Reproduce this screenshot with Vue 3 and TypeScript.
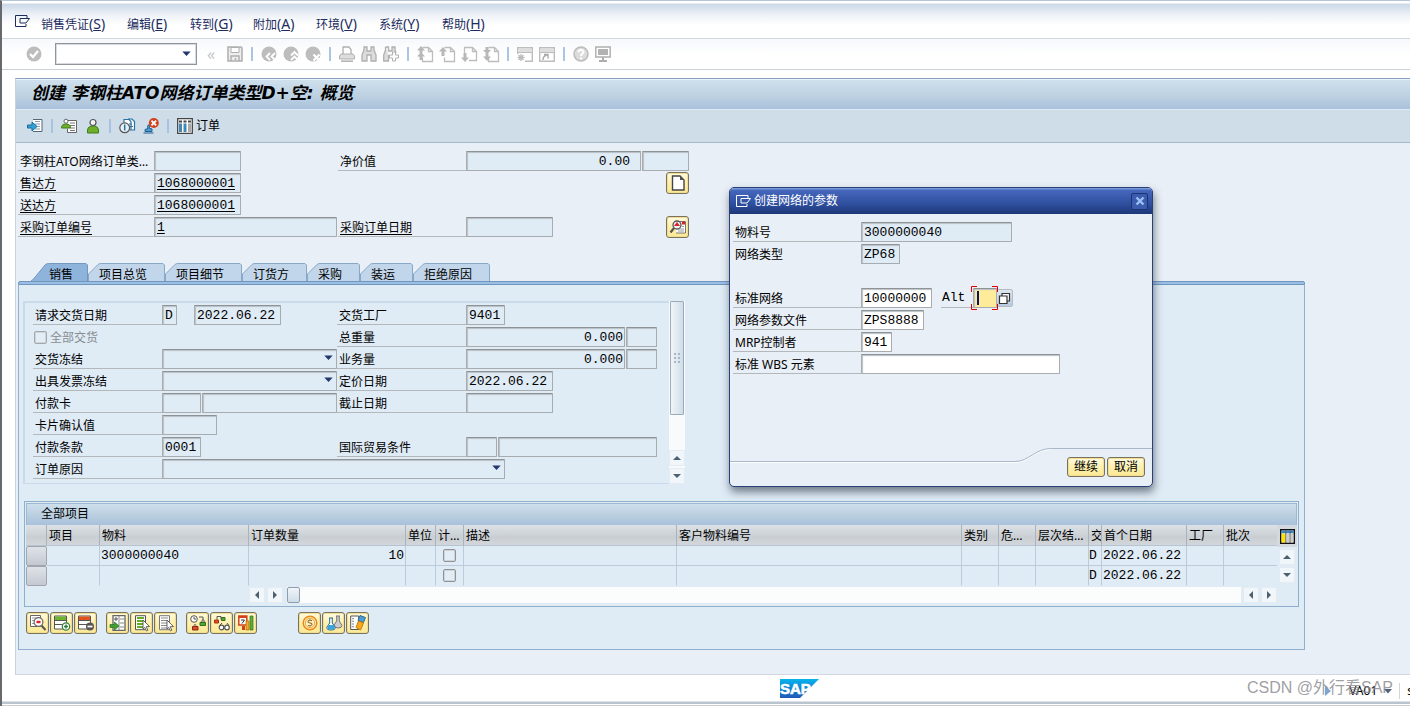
<script setup lang="ts">
interface Menu { text: string; key: string }
interface Tab { text: string; width: number }
interface Row { date: string; material: string; qty: string }

const menus: Menu[] = [
  { text: '销售凭证', key: 'S' },
  { text: '编辑', key: 'E' },
  { text: '转到', key: 'G' },
  { text: '附加', key: 'A' },
  { text: '环境', key: 'V' },
  { text: '系统', key: 'Y' },
  { text: '帮助', key: 'H' },
]

const systemTools: string[][] = [
  ['back', 'exit', 'cancel'],
  ['print', 'find', 'findNext'],
  ['pageFirst', 'pageUp', 'pageDown', 'pageLast'],
  ['session', 'shortcut'],
  ['help', 'monitor'],
]

const appTools: string[][] = [['enterDoc'], ['personDoc', 'person'], ['clockDoc', 'stampCancel']]

const tabs: Tab[] = [
  { text: '销售', width: 58 },
  { text: '项目总览', width: 77 },
  { text: '项目细节', width: 77 },
  { text: '订货方', width: 65 },
  { text: '采购', width: 53 },
  { text: '装运', width: 53 },
  { text: '拒绝原因', width: 77 },
]

const tabShape = (tab: Tab, index: number): string =>
  index === 0
    ? `M0.5 18.5 Q4 16 6 13 L15 2 Q16.5 0.5 18.5 0.5 H${tab.width - 2} L${tab.width - 0.5} 2 V18.5`
    : `M0.5 18.5 V11 L10 1.5 Q11 0.5 13 0.5 H${tab.width - 2} L${tab.width - 0.5} 2 V18.5`

const columns: string[] = ['项目', '物料', '订单数量', '单位', '计…', '描述', '客户物料编号', '类别', '危…', '层次结…', '交', '首个日期', '工厂', '批次']

const rows: Row[] = [
  { material: '3000000040', qty: '10', date: '2022.06.22' },
  { material: '', qty: '', date: '2022.06.22' },
]

const itemTools: string[][] = [
  ['detail', 'rowAdd', 'rowRemove'],
  ['listEnter', 'listSelect', 'listClear'],
  ['schedule', 'structure', 'calendar'],
  ['coin', 'flasks', 'notes'],
]

const disc = '<circle cx="8" cy="8" r="7.5" fill="#bdbdbd"/>'
const page = '<path d="M5.500 1.500h6l4 4v10h-10v-4M11.500 1.500v4h4" fill="none" stroke="#bdbdbd" stroke-width="1.300"/>'
const windowFrame = '<path d="M.7 8V1.700h14.600v13.600H8" fill="none" stroke="#bdbdbd" stroke-width="1.400"/><path d="M2 3h12v3H2z" fill="#dedede"/><path d="M1 6.500h14" stroke="#bdbdbd"/>'
const sheet = '<path d="M3 .7h12v14.600H3z" fill="#fff" stroke="#666" stroke-width="1.300"/>'
const lines = '<path d="M.5 1h12v13H.5z" fill="#fff" stroke="#555"/><path d="M.5 5.500h12M.5 9.500h12" stroke="#555"/>'
const pointer = '<path d="M9 5l6.500 6.500-3.300.2 1.700 3.500-1.500.7-1.700-3.500L9 14z" fill="#fff" stroke="#555" stroke-width=".9"/>'

const icons: Record<string, string> = {
  check: disc + '<path d="M4 8l3 3 5-6" fill="none" stroke="#fff" stroke-width="2.200"/>',
  save: '<path d="M1 1h13l1 1v13H1z" fill="#eee" stroke="#aeaeae" stroke-width="1.500"/><path d="M4 1.500h8v5H4z" fill="#fff" stroke="#aeaeae"/><path d="M4 15v-5h8v5M8.500 12v2" fill="none" stroke="#aeaeae" stroke-width="1.400"/>',
  back: disc + '<path d="M9 7l-3.500 3.500L9 14M14 7l-3.500 3.500L14 14" fill="none" stroke="#fff" stroke-width="1.800"/>',
  exit: disc + '<path d="M8 9.500l3.500-3.500L15 9.500M8 14l3.500-3.500L15 14" fill="none" stroke="#fff" stroke-width="1.800"/>',
  cancel: disc + '<path d="M8.500 8.500l6 6M14.500 8.500l-6 6" stroke="#fff" stroke-width="2.200"/>',
  print: '<path d="M4 8V1h6l2 2.500V8" fill="#fff" stroke="#b0b0b0" stroke-width="1.300"/><path d="M2 8h12l1.500 2v3H.5v-3z" fill="#ddd" stroke="#b0b0b0"/><path d="M2 15.200h12" stroke="#b0b0b0" stroke-width="1.500"/>',
  find: '<path d="M3 1h3v4h4V1h3v3l2 5v6h-5V9H6v6H1V9l2-5z" fill="#ddd" stroke="#b0b0b0" stroke-width="1.300"/>',
  findNext: '<path d="M2.500 1h3v4h3.500V1h3v3l1 3M5.500 9v6H.7V9l1.800-5V1" fill="#ddd" stroke="#b0b0b0" stroke-width="1.300"/><path d="M9.500 6h3v3h3v3h-3v3h-3v-3h-3V9h3z" fill="#fff" stroke="#b0b0b0"/>',
  pageFirst: page + '<path d="M4 0l4 4.500H5.500V7h-3V4.500H0zM4 6l4 4.500H5.500V14h-3v-3.500H0z" fill="#b8b8b8"/>',
  pageUp: page + '<path d="M4 1l4 4.500H5.500V10h-3V5.500H0z" fill="#b8b8b8"/>',
  pageDown: '<path d="M3.500 7V1.500h8l4 4v9H8M11.500 1.500v4h4" fill="none" stroke="#bdbdbd" stroke-width="1.300"/><path d="M4 16L0 11.500h2.500V7h3v4.500H8z" fill="#b8b8b8"/>',
  pageLast: page + '<path d="M4 8.500L0 4h2.500V1h3v3H8zM4 15L0 10.500h2.500v-3h3v3H8z" fill="#b8b8b8"/>',
  session: windowFrame + '<path d="M4 8v7M.5 11.500h7M1.500 9l5 5M6.500 9l-5 5" stroke="#bdbdbd" stroke-width="1.300"/>',
  shortcut: windowFrame + '<path d="M.7 8v7.300H8" fill="none" stroke="#bdbdbd" stroke-width="1.400"/><path d="M4 14q0-4 4-5M5 8.500h4v4" fill="none" stroke="#aaa" stroke-width="1.400"/>',
  help: '<circle cx="8" cy="8" r="7" fill="#dcdcdc" stroke="#bbb" stroke-width="1.500"/><path d="M5.500 6.300q0-2.300 2.500-2.300t2.500 2q0 1.200-1.500 2-1 .6-1 2M8 11.500v1.700" fill="none" stroke="#fff" stroke-width="2"/>',
  monitor: '<path d="M.8 1h14.400v10H.8z" fill="#fff" stroke="#aeaeae" stroke-width="1.400"/><path d="M3 3h10v6H3z" fill="#b3b3b3"/><path d="M8 11v3M4 15h8" stroke="#aeaeae" stroke-width="2"/>',
  enterDoc: '<path d="M6 1.500h9v12H6" fill="#fff" stroke="#567"/><path d="M8 3.500h5M8 6h5M10 8.500h3M8 11h5" stroke="#89a"/><path d="M.5 7H5V4l5 4.500-5 4.500v-3H.5z" fill="#33a0d6" stroke="#166d9f"/>',
  personDoc: '<path d="M7 2.500h8.500v12h-9v-4" fill="#fff" stroke="#666"/><path d="M9 5h5M9 7.500h5M9 10h5M9 12.500h5" stroke="#777"/><circle cx="5" cy="3.200" r="2" fill="#fff" stroke="#666"/><path d="M.5 10q0-4 4.500-4t4.500 4z" fill="#6fae28" stroke="#3e7d1b"/>',
  person: '<path d="M2.500 15v-3q0-3 3.500-4h4q3.500 1 3.500 4v3z" fill="#6fae28" stroke="#3e7d1b"/><circle cx="8" cy="4.500" r="3" fill="#f4f4f4" stroke="#555" stroke-width="1.200"/>',
  clockDoc: '<path d="M5 4.500v-3h5l2 2v8M9 1h4l2.500 2.500V12H11" fill="#fff" stroke="#2872a3" stroke-width="1.200"/><path d="M10 6h3M11 8.500h3" stroke="#2872a3"/><circle cx="5.700" cy="9.800" r="4.900" fill="#e6f2fa" stroke="#555" stroke-width="1.200"/><path d="M5.700 6.500v6" stroke="#2872a3" stroke-width="1.500"/>',
  stampCancel: '<path d="M.5 15h10M2 13.500v-2l3-1-.5-2Q5 6 6.500 7T6 10l3 1v2.500z" fill="#4b9bcf" stroke="#1f608f"/><circle cx="10.800" cy="5" r="5" fill="#d4401c"/><path d="M8.500 2.700l4.600 4.600M13.100 2.700L8.500 7.300" stroke="#fff" stroke-width="1.900"/>',
  table: '<path d="M.7 .7h14.600v14.600H.7z" fill="#fff" stroke="#444" stroke-width="1.300"/><path d="M2 2.500h3v2H2zM6.500 2.500h3v2h-3zM11 2.500h3v2h-3z" fill="#444"/><path d="M2 5.500h3v8.500H2zM6.500 5.500h3v8.500h-3z" fill="#4587b2"/><path d="M11 5.500h3v8.500h-3z" fill="#aaa"/>',
  document: '<path d="M2.500 1h7.500l4 4v10H2.500z" fill="#fff" stroke="#444" stroke-width="1.400"/><path d="M10 1v4h4z" fill="#555"/>',
  inspect: '<path d="M7 2.500h8.500v11.500H6" fill="#fff" stroke="#777"/><path d="M12 2.500h3v3h-3z" fill="#e02020"/><path d="M8 10h6M8 12h6M12 7.500h2" stroke="#999"/><circle cx="7" cy="6" r="4" fill="#f3f3f3" stroke="#555" stroke-width="1.300"/><path d="M4 7l3-4 3 4z" fill="#e02020"/><path d="M4 9L.5 13.500" stroke="#555" stroke-width="2.200"/>',
  detail: '<path d="M.5 .5h10v11H.5z" fill="#fff" stroke="#666"/><path d="M2 3h4M2 5.500h2M2 8.500h2" stroke="#999"/><circle cx="8.500" cy="7" r="4.400" fill="#fff" stroke="#666" stroke-width="1.200"/><path d="M6.500 7h4" stroke="#e02020" stroke-width="2.400"/><path d="M11.500 10.500l4 4.500" stroke="#555" stroke-width="2"/>',
  rowAdd: lines + '<path d="M1 1.500h11v3.500H1z" fill="#6db52c"/><circle cx="12" cy="11.500" r="3.700" fill="#fff" stroke="#2f7d3e" stroke-width="1.200"/><path d="M10 11.500h4M12 9.500v4" stroke="#2f7d3e" stroke-width="1.500"/>',
  rowRemove: lines + '<path d="M1 1.500h11v3.500H1z" fill="#e0531b"/><circle cx="12" cy="11.500" r="4" fill="#555"/><path d="M9.500 11.500h5" stroke="#fff" stroke-width="1.700"/>',
  listEnter: sheet + '<path d="M9 1v14M10 4h4M10 8h4M10 12h4" stroke="#888"/><path d="M4 4h4M6 2v4" stroke="#555"/><path d="M0 9.500h4.500V7L9 11l-4.500 4v-2.500H0z" fill="#42a02f" stroke="#237121" stroke-width=".7"/>',
  listSelect: '<path d="M1.500 .7h10v14h-10z" fill="#fff" stroke="#555"/><path d="M3 3h7M3 6h7M3 9h7M3 12h7" stroke="#65ad24" stroke-width="2.200"/>' + pointer,
  listClear: '<path d="M1.500 .7h10v14h-10z" fill="#fff" stroke="#777"/><path d="M3 3h7M3 5.500h7M3 8h7M3 10.500h7M3 13h7" stroke="#888"/>' + pointer,
  schedule: '<circle cx="4" cy="4" r="3.300" fill="#fff" stroke="#555"/><path d="M4 2v2h2" fill="none" stroke="#555"/><path d="M9 2h4v5" fill="none" stroke="#555"/><path d="M11 7l2-3 2 3M3 12l2-3 2 3" fill="none" stroke="#777"/><path d="M10 7.500h5.500v3H10z" fill="#55a630" stroke="#2f701d"/><path d="M2.500 11.500H8v3.500H2.500z" fill="#d94b22" stroke="#8b2b14"/>',
  structure: '<path d="M3 4.500V1.500h4v3h3" fill="none" stroke="#555"/><path d="M.5 5h4v3h-4z" fill="#e0531b" stroke="#a33010"/><path d="M7.500 2.500h3.500v3H7.500z" fill="#55a630" stroke="#2f701d"/><circle cx="7.500" cy="12.500" r="2.300" fill="#fff" stroke="#555" stroke-width="1.200"/><circle cx="13" cy="12.500" r="2.300" fill="#fff" stroke="#555" stroke-width="1.200"/><path d="M6 10l2-2M14.500 10l-1.500-2" stroke="#555"/>',
  calendar: '<path d="M.8 1h8v9h-8z" fill="#fff" stroke="#d44118" stroke-width="1.500"/><path d="M1 2h8" stroke="#d44118" stroke-width="2"/><path d="M3 5h3.500L4 8.500" fill="none" stroke="#333"/><path d="M4 11h3v4H4z" fill="#d44118"/><path d="M8 6h3v9H8z" fill="#f2aa24" stroke="#a96e09" stroke-width=".7"/><path d="M12 1h3v14h-3z" fill="#5fae3b" stroke="#2f701d" stroke-width=".7"/>',
  coin: '<circle cx="8" cy="8" r="6.800" fill="#fff2bd" stroke="#e98a1a" stroke-width="1.500"/><circle cx="8" cy="8" r="4.700" fill="none" stroke="#efa23a"/><path d="M10 5.700Q7.500 4.500 6.300 6T8 8t1.700 2T6 10.500" fill="none" stroke="#8a6a30" stroke-width="1.100"/>',
  flasks: '<path d="M10 1h4M10.700 1v5L8 10q0 3 4 3t4-2.500L13.300 6V1" fill="#ccc" stroke="#777"/><path d="M3 3h4M3.700 3v5L.7 12.500q0 2.500 4.300 2.500t4.300-2.500L6.300 8V3" fill="#fff" stroke="#236b97"/><path d="M2.500 10h5l1.500 3q-.5 1.500-4 1.500T1.300 13z" fill="#3ca3d9"/>',
  notes: '<path d="M.7 1h8v13.500h-8z" fill="#fff" stroke="#555"/><path d="M3 3v10" stroke="#333" stroke-dasharray="1.200 1.500"/><path d="M10 .5l5.500 2-2 5-5.500-2z" fill="#4f9dcc" stroke="#2c6d96"/><path d="M8.500 6l5 2-3 7-4.500-2.500z" fill="#f6a91c" stroke="#c9790a"/>',
  layout: '<path d="M.8 .8h14.400v14.400H.8z" fill="#fff" stroke="#111" stroke-width="1.600"/><path d="M1.600 1.600h12.800v3H1.600z" fill="#3985c4"/><path d="M1.600 5h4v9.400h-4z" fill="#ffe100"/><path d="M7 5h3v9.400H7zM11.300 5h3v9.400h-3z" fill="#ccc"/><path d="M6.200 1.600v13M10.700 1.600v13" stroke="#555"/>',
}
</script>

<template>
  <div class="window">
    <nav class="menubar">
      <svg class="winicon" viewBox="0 0 16 14"><path d="M12 3V.5H.5v11H11V9M5 3.500h9.500L11 8H5z" fill="none" stroke="currentColor" /></svg>
      <a v-for="m in menus" :key="m.key" href="#" class="menu">{{ m.text }}<span class="accel">(<u>{{ m.key }}</u>)</span></a>
    </nav>

    <div class="systembar">
      <button class="tool" aria-label="回车"><svg viewBox="0 0 16 16" v-html="icons.check" /></button>
      <span class="command">
        <input type="text" aria-label="命令">
        <svg class="arrow" viewBox="0 0 10 6"><path d="M0 .5h10L5 6z" /></svg>
      </span>
      <button class="collapse" aria-label="折叠">«</button>
      <button class="tool" aria-label="保存"><svg viewBox="0 0 16 16" v-html="icons.save" /></button>
      <template v-for="(group, g) in systemTools" :key="g">
        <i class="sep" />
        <button v-for="name in group" :key="name" class="tool" :aria-label="name"><svg viewBox="0 0 16 16" v-html="icons[name]" /></button>
      </template>
    </div>

    <main class="screen">
      <h1 class="title">创建 李钢柱ATO网络订单类型D+空: 概览</h1>
      <div class="appbar">
        <template v-for="(group, g) in appTools" :key="g">
          <button v-for="name in group" :key="name" class="tool" :aria-label="name"><svg viewBox="0 0 16 16" v-html="icons[name]" /></button>
          <i class="sep" />
        </template>
        <button class="tool wide"><svg viewBox="0 0 16 16" v-html="icons.table" />订单</button>
      </div>

      <section class="header-form">
        <div class="cell"><label for="order">李钢柱ATO网络订单类…</label><input id="order" class="w87"></div>
        <div class="cell"><label for="net">净价值</label><input id="net" class="w175 num pad" value="0.00"><input class="w47" aria-label="货币"></div>
        <div class="cell"><label for="sold" class="link">售达方</label><input id="sold" class="w87 link" value="1068000001"></div>
        <div class="cell"><button class="yellow square end" aria-label="凭证"><svg viewBox="0 0 16 16" v-html="icons.document" /></button></div>
        <div class="cell"><label for="ship" class="link">送达方</label><input id="ship" class="w87 link" value="1068000001"></div>
        <div class="cell" />
        <div class="cell"><label for="po" class="link">采购订单编号</label><input id="po" class="w183 link" value="1"></div>
        <div class="cell"><label for="podate" class="link">采购订单日期</label><input id="podate" class="w87"><button class="yellow square end" aria-label="伙伴"><svg viewBox="0 0 16 16" v-html="icons.inspect" /></button></div>
      </section>

      <section class="tabset">
        <div class="tabs" role="tablist">
          <button v-for="(t, i) in tabs" :key="t.text" role="tab" class="tab" :class="{ active: i === 0 }" :style="{ width: t.width + 'px' }">
            <svg :width="t.width" height="19"><path :d="tabShape(t, i)" /></svg><span>{{ t.text }}</span>
          </button>
        </div>
        <div class="rail" />
        <div class="tabbody">
          <div class="sales">
            <div class="sales-form">
              <div class="cell"><label for="reqd">请求交货日期</label><input id="reqd" class="w15" value="D"><input class="w87 apart" aria-label="日期" value="2022.06.22"></div>
              <div class="cell"><label for="plant">交货工厂</label><input id="plant" class="w39" value="9401"></div>
              <div class="cell"><input id="full" type="checkbox" class="box"><label for="full" class="boxlabel">全部交货</label></div>
              <div class="cell"><label for="weight">总重量</label><input id="weight" class="w159 num" value="0.000"><input class="w31" aria-label="重量单位"></div>
              <div class="cell"><label for="dblock">交货冻结</label><span class="pick w175"><select id="dblock" /><svg class="arrow" viewBox="0 0 10 6"><path d="M0 .5h10L5 6z" /></svg></span></div>
              <div class="cell"><label for="volume">业务量</label><input id="volume" class="w159 num" value="0.000"><input class="w31" aria-label="体积单位"></div>
              <div class="cell"><label for="bblock">出具发票冻结</label><span class="pick w175"><select id="bblock" /><svg class="arrow" viewBox="0 0 10 6"><path d="M0 .5h10L5 6z" /></svg></span></div>
              <div class="cell"><label for="pdate">定价日期</label><input id="pdate" class="w87" value="2022.06.22"></div>
              <div class="cell"><label for="card">付款卡</label><input id="card" class="w39"><input class="w135" aria-label="卡号"></div>
              <div class="cell"><label for="until">截止日期</label><input id="until" class="w87"></div>
              <div class="cell"><label for="cvv">卡片确认值</label><input id="cvv" class="w55"></div>
              <div class="cell" />
              <div class="cell"><label for="terms">付款条款</label><input id="terms" class="w39" value="0001"></div>
              <div class="cell"><label for="inco">国际贸易条件</label><input id="inco" class="w31"><input class="w159" aria-label="贸易条件地点"></div>
              <div class="cell full"><label for="reason">订单原因</label><span class="pick w343"><select id="reason" /><svg class="arrow" viewBox="0 0 10 6"><path d="M0 .5h10L5 6z" /></svg></span></div>
            </div>
            <div class="vscroll">
              <div class="vthumb"><i v-for="n in 6" :key="n" /></div>
              <button class="sbtn push" aria-label="向上"><svg viewBox="0 0 8 8"><path d="M0 6l4-4 4 4z" /></svg></button>
              <button class="sbtn" aria-label="向下"><svg viewBox="0 0 8 8"><path d="M0 2l4 4 4-4z" /></svg></button>
            </div>
          </div>

          <div class="items">
            <h2>全部项目</h2>
            <div class="grid">
              <table>
                <colgroup><col v-for="n in 15" :key="n" :class="'c' + n"></colgroup>
                <thead><tr><th /><th v-for="c in columns" :key="c">{{ c }}</th></tr></thead>
                <tbody>
                  <tr v-for="(r, i) in rows" :key="i">
                    <td class="handle" /><td /><td>{{ r.material }}</td><td class="qty">{{ r.qty }}</td><td />
                    <td class="tick"><input type="checkbox" class="box" aria-label="计"></td>
                    <td /><td /><td /><td /><td /><td class="flag">D</td><td>{{ r.date }}</td><td /><td />
                  </tr>
                </tbody>
              </table>
              <div class="side">
                <button class="config" aria-label="配置"><svg viewBox="0 0 16 16" v-html="icons.layout" /></button>
                <button class="sbtn" aria-label="上一行"><svg viewBox="0 0 8 8"><path d="M0 6l4-4 4 4z" /></svg></button>
                <button class="sbtn" aria-label="下一行"><svg viewBox="0 0 8 8"><path d="M0 2l4 4 4-4z" /></svg></button>
              </div>
            </div>
            <div class="hscroll">
              <button class="sbtn" aria-label="向左"><svg viewBox="0 0 8 8"><path d="M6 0L2 4l4 4z" /></svg></button>
              <button class="sbtn" aria-label="向右"><svg viewBox="0 0 8 8"><path d="M2 0l4 4-4 4z" /></svg></button>
              <div class="htrack"><div class="hthumb" /></div>
              <button class="sbtn" aria-label="左移"><svg viewBox="0 0 8 8"><path d="M6 0L2 4l4 4z" /></svg></button>
              <button class="sbtn" aria-label="右移"><svg viewBox="0 0 8 8"><path d="M2 0l4 4-4 4z" /></svg></button>
            </div>
          </div>

          <div class="itembar">
            <div v-for="(group, g) in itemTools" :key="g" class="group">
              <button v-for="name in group" :key="name" class="yellow square" :aria-label="name"><svg viewBox="0 0 16 16" v-html="icons[name]" /></button>
            </div>
          </div>
        </div>
      </section>
    </main>

    <footer class="status">
      <svg class="logo" viewBox="0 0 39 19" role="img" aria-label="SAP">
        <defs><linearGradient id="sapfill" x2="0" y2="1"><stop offset="0" stop-color="#05b3ee" /><stop offset="1" stop-color="#2058b8" /></linearGradient></defs>
        <path d="M0 0h39L20 19H0z" fill="url(#sapfill)" />
        <text x="0" y="15" font-size="15" font-weight="700" fill="#fff" stroke="#fff" stroke-width=".6">SAP</text>
      </svg>
      <div class="session">
        <svg viewBox="0 0 8 10"><path d="M1 0l6 5-6 5z" fill="#7ba6d2" /></svg>
        <span>VA01</span>
        <svg class="tri" viewBox="0 0 10 6"><path d="M0 .5h10L5 6z" fill="#53617c" /></svg>
        <i /><span>s</span>
      </div>
      <div class="watermark">CSDN @外行看SAP</div>
    </footer>

    <section class="dialog" role="dialog" aria-label="创建网络的参数">
      <header>
        <svg class="winicon" viewBox="0 0 16 14"><path d="M12 3V.5H.5v11H11V9M5 3.500h9.500L11 8H5z" fill="none" stroke="currentColor" /></svg>
        <span>创建网络的参数</span>
        <button class="close" aria-label="关闭"><svg viewBox="0 0 10 10"><path d="M1.500 1.500l7 7M8.500 1.500l-7 7" stroke="#9cc0f4" stroke-width="2.400" /></svg></button>
      </header>
      <div class="params">
        <div class="cell"><label for="mat">物料号</label><input id="mat" class="w151 shade" value="3000000040"></div>
        <div class="cell"><label for="ntype" class="plain">网络类型</label><input id="ntype" class="w39 shade" value="ZP68"></div>
        <div class="cell" />
        <div class="cell">
          <label for="stdnet">标准网络</label><input id="stdnet" class="w71" value="10000000">
          <label for="alt" class="alt">Alt</label>
          <span class="focus"><input id="alt"><i class="caret" /><svg viewBox="0 0 27 24"><path d="M6 .5H.5V6M21 .5h5.500V6M6 23.500H.5V18M21 23.500h5.500V18" fill="none" stroke="#e00000" /></svg></span>
          <button class="match" aria-label="输入帮助"><svg viewBox="0 0 13 13"><path d="M4 1.500h7.500V9H4z" fill="#fff" stroke="#333" stroke-width="1.200" /><path d="M1.500 4H9v7.500H1.500z" fill="#fff" stroke="#333" stroke-width="1.200" /></svg></button>
        </div>
        <div class="cell"><label for="profile">网络参数文件</label><input id="profile" class="w63" value="ZPS8888"></div>
        <div class="cell"><label for="mrp">MRP控制者</label><input id="mrp" class="w31" value="941"></div>
        <div class="cell"><label for="wbs">标准 WBS 元素</label><input id="wbs" class="w199"></div>
      </div>
      <div class="foot">
        <i class="low" />
        <svg class="curve" width="36" height="16"><path d="M0 14.500C14 14.500 20 1.500 36 1.500" fill="none" stroke="#fff" /><path d="M0 13.500C14 13.500 20 .5 36 .5" fill="none" stroke="#a9b7c6" /></svg>
        <div class="actions"><button class="yellow text">继续</button><button class="yellow text">取消</button></div>
      </div>
    </section>
  </div>
</template>

<style>
body { margin: 0; overflow: hidden; }
</style>

<style scoped>
* { box-sizing: border-box; }
.window {
  position: relative; display: flex; flex-direction: column; min-height: 100vh; overflow: hidden;
  border-left: 2px solid #67696d; border-top: 1px solid #b5c5d8; background: #fff; color: #000;
  font: 12px/16px "Noto Sans", "Noto Sans CJK SC", sans-serif;
}
button, input, select { font: inherit; color: inherit; margin: 0; padding: 0; }
button { border: 0; background: none; flex: none; }
svg { display: block; overflow: visible; }

.menubar {
  display: grid; grid-template-columns: 26px 86px repeat(6, 63px); align-items: center;
  height: 38px; padding: 9px 0 0 13px; color: #1c2c5e; border-bottom: 1px solid #d3d8df;
  background: linear-gradient(#fff 0 2px, #cbd8e8 3px, #eef2f7 14px, #fff 24px);
}
.winicon { width: 16px; height: 14px; align-self: start; }
.menubar .winicon { margin-top: 5px; }
.menu { color: inherit; text-decoration: none; white-space: nowrap; }
.accel { font-size: 14px; }

.systembar {
  display: flex; align-items: center; gap: 6px; height: 31px; padding: 0 0 1px 24px;
  border-bottom: 1px solid #cdd1d8; background: linear-gradient(#f6f8fb, #fff 16px);
}
.tool svg { width: 16px; height: 16px; }
.sep { width: 6px; height: 14px; background: linear-gradient(90deg, transparent 2px, #a9c7e4 2px 4px, transparent 4px); }
.command { position: relative; width: 142px; height: 22px; margin: 1px 0 0 7px; }
.command input { width: 100%; height: 100%; border: 1px solid #8f959b; box-shadow: inset 0 0 0 1px #d7dade; background: #fff; }
.arrow { position: absolute; right: 6px; top: 8px; width: 9px; height: 5px; fill: #21376d; pointer-events: none; }
.collapse { width: 16px; color: #c3c6ca; font-size: 16px; line-height: 16px; text-align: center; margin-right: 2px; }

.screen {
  flex: 1; margin: 8px 0 0 13px; border-left: 1px solid #c9d3e0; border-top: 1px solid #8ba0bc;
  border-bottom: 1px solid #d1d6e2; background: #e9eff6;
}
.title {
  height: 31px; margin: 0; padding: 0 0 0 15px; border-bottom: 1px solid #dfeaf3; border-top: 1px solid #e9f3fa;
  background: linear-gradient(#cfe0ed, #bdd1e1 55%, #a9c1dc);
  font: italic 700 17px/26px "DejaVu Sans", "Noto Sans CJK SC", sans-serif;
}
.appbar { display: flex; align-items: center; gap: 8px; height: 33px; padding: 0 0 1px 11px; background: #cfdde8; border-bottom: 1px solid #a2bace; }
.appbar .sep { width: 2px; background: #a7c3df; }
.tool.wide { display: flex; align-items: center; gap: 3px; }

.header-form { display: grid; grid-template-columns: 320px 351px; padding: 7px 0 0 2px; }
.header-form label { width: 136px; }
.header-form .cell:nth-child(even) label { width: 128px; }
.cell { display: flex; align-items: center; gap: 1px; height: 22px; }
.cell label { flex: none; height: 20px; padding-left: 2px; line-height: 22px; border-bottom: 1px solid #b5b8ba; margin-right: -1px; white-space: nowrap; }
.cell label.link { text-decoration: underline; text-underline-offset: 2px; }
.cell input:not(.box), select {
  flex: none; height: 20px; padding: 0 1px 0 2px; border: 1px solid #a9acae; border-top-color: #8f9396; border-radius: 1px;
  background: #dfebf5; box-shadow: inset 1px 1px 1px #b9c0c5; font: 13px/18px "Liberation Mono", "Noto Sans CJK SC", monospace;
}
input.link { text-decoration: underline; text-underline-offset: 2px; }
.cell input.num { text-align: right; }
.cell input.pad { padding-right: 10px; }
.end { margin-left: auto; }
.w15 { width: 15px; } .w31 { width: 31px; } .w39 { width: 39px; } .w47 { width: 47px; } .w55 { width: 55px; }
.w63 { width: 63px; } .w71 { width: 71px; } .w87 { width: 87px; } .w135 { width: 135px; } .w151 { width: 151px; }
.w159 { width: 159px; } .w175 { width: 175px; } .w183 { width: 183px; } .w199 { width: 199px; } .w343 { width: 343px; }
.apart { margin-left: 16px; }
.pick { position: relative; height: 20px; }
.pick select { width: 100%; appearance: none; display: block; }
.pick .arrow { top: 6px; right: 4px; }

.yellow {
  border: 1px solid #77735f; border-radius: 3px; background: linear-gradient(#fffbe2, #fdefb0 50%, #fbe993);
  box-shadow: inset 0 0 0 1px #f5dd90;
}
.yellow svg { width: 16px; height: 16px; margin: auto; }
.square { width: 23px; height: 22px; }

.tabset { margin: 25px 105px 24px 2px; }
.tabs { display: flex; height: 18px; padding-left: 12px; }
.tab { position: relative; height: 19px; text-align: left; padding: 4px 0 0 11px; line-height: 14px; }
.tab.active { padding-left: 19px; }
.tab svg { position: absolute; left: 0; top: 0; fill: #c1d6ea; stroke: #88a8c8; }
.tab.active svg { fill: #8fb4dc; stroke: #7398c0; }
.tab span { position: relative; }
.rail { position: relative; height: 4px; border: 1px solid #6f96bd; background: #9bbfe4; border-radius: 2px 2px 0 0; }
.tabbody { border: 1px solid #8fb0d1; border-top: 0; background: #dfebf5; padding: 16px 5px 15px; }

.sales { display: flex; width: 661px; max-width: 100%; }
.sales-form {
  flex: 1; display: grid; grid-template-columns: 304px 1fr; align-content: start; padding: 1px 0 3px 8px; margin-left: -1px;
  border: solid #c9daea; border-width: 2px 0 1px 2px; height: 183px;
}
.sales-form .cell label { width: 129px; }
.sales-form .cell .boxlabel { border: 0; color: #888d92; }
.full { grid-column: 1 / 3; }
.box { appearance: none; width: 13px; height: 13px; border: 1px solid #8f9396; border-radius: 2px; background: #e3edf5; box-shadow: inset 0 0 0 1px #cdd5db; }
.sales-form .box { margin-left: 1px; border-color: #a4a8ab; }
.vscroll { width: 16px; display: flex; flex-direction: column; gap: 2px; background: #f9fafb; }
.vthumb {
  display: grid; grid-template-columns: 2px 2px; gap: 2px; place-content: center; height: 114px; margin: 0 1px;
  border: 1px solid #9cabb9; border-radius: 1px; background: linear-gradient(90deg, #f1f5f8, #cfdde8);
}
.vthumb i { width: 2px; height: 2px; background: #a6b8c8; }
.sbtn { width: 16px; height: 16px; background: #f1f6fa; border: 1px solid #e4ebf2; display: grid; place-items: center; }
.sbtn svg { width: 8px; height: 8px; fill: #4c6070; }
.push { margin-top: auto; }

.items { margin: 17px 0 0; border: 1px solid #8fb0cc; padding: 1px; }
.items h2 {
  height: 22px; margin: 0; padding-left: 14px; font-size: 12px; line-height: 20px; font-weight: 400;
  border: 1px solid #9db8d0; border-bottom: 0; background: linear-gradient(#cddfed, #b9cede 55%, #a9c1dc);
}
.grid { display: flex; }
table { flex: 1; width: 0; table-layout: fixed; border-collapse: separate; border-spacing: 0; align-self: flex-start; }
.c1 { width: 21px; } .c2 { width: 53px; } .c3 { width: 149px; } .c4 { width: 157px; } .c5 { width: 30px; } .c6 { width: 28px; }
.c7 { width: 213px; } .c9, .c10, .c14 { width: 37px; } .c11 { width: 53px; } .c12 { width: 13px; } .c13 { width: 85px; } .c15 { width: 53px; }
th {
  height: 21px; padding: 0 0 0 2px; font-weight: 400; text-align: left; white-space: nowrap; overflow: hidden; line-height: 19px;
  border-right: 1px solid #aab3bb; border-bottom: 1px solid #b5c4d3; background: linear-gradient(#dde2e6, #c9ced3 60%, #d3d7dc);
}
th:last-child { border-right: 0; }
td {
  height: 20px; padding: 0 1px; border-right: 1px solid #bccbd9; border-bottom: 1px solid #bccbd9;
  font: 13px/19px "Liberation Mono", monospace; white-space: nowrap; overflow: hidden;
}
td.flag { padding: 0; }
td:last-child { border-right: 0; }
tbody tr:last-child td:not(.handle) { border-bottom-color: transparent; }
td.handle { border: 1px solid #a0a6ab; border-radius: 2px; background: linear-gradient(#dfe3e8, #c4c9d1); }
.qty { text-align: right; }
.tick { text-align: center; line-height: 0; }
.side { width: 20px; display: flex; flex-direction: column; align-items: center; gap: 2px; }
.config { width: 20px; height: 22px; background: #d3d9df; display: grid; place-items: center; }
.config svg { width: 15px; height: 15px; }
.hscroll { display: flex; gap: 2px; margin: 1px 20px 2px 223px; height: 16px; }
.htrack { flex: 1; background: #fbfcfc; margin-left: 2px; }
.hthumb { width: 13px; height: 16px; border: 1px solid #8e9dab; border-radius: 2px; background: linear-gradient(#f1f5f8, #cfdde8); }

.itembar { display: flex; padding: 5px 0 0 2px; }
.group { display: flex; gap: 1px; margin-right: 9px; }
.group:nth-child(3) { margin-right: 41px; }

.status { position: relative; display: flex; align-items: center; height: 31px; padding-bottom: 4px; background: linear-gradient(#fff 26px, #b9c4cf 27px 29px, #fff 29px 30px, #cfcdca 30px); }
.logo { width: 39px; height: 19px; margin-left: 778px; font-family: "Liberation Sans", sans-serif; }
.session { display: flex; align-items: center; gap: 7px; margin-left: auto; padding-top: 4px; white-space: nowrap; margin-right: -3px; }
.session svg { width: 8px; height: 10px; }
.session span:first-of-type { margin-left: 10px; }
.session i { width: 1px; height: 16px; background: #d5d5d5; }
.watermark { position: absolute; right: 17px; top: 1px; font: 16px/24px "Liberation Sans", "Noto Sans CJK SC", sans-serif; color: #85858bcc; }

.dialog {
  position: absolute; left: 727px; top: 186px; width: 424px; height: 300px; display: flex; flex-direction: column;
  border: 1px solid #28417c; border-radius: 5px; background: #e9eff6; box-shadow: 1px 5px 8px #3f4a56b0;
}
.dialog header {
  display: flex; align-items: center; gap: 2px; height: 26px; padding: 0 4px 0 6px; color: #fff; border-radius: 4px 4px 0 0;
  background: linear-gradient(#7898d8 0 1px, #4668bd 2px, #2f4f9f 60%, #1d3878);
}
.dialog .winicon { margin-top: 7px; }
.close { width: 17px; height: 17px; margin-left: auto; border: 1px solid #1d3270; border-radius: 2px; background: #3b5cae; display: grid; place-items: center; }
.close svg { width: 10px; height: 10px; }
.params { padding: 7px 0 0 3px; }
.params .cell label { width: 128px; }
.params .cell input { background: #fff; }
.params .cell input.shade { background: #dfebf5; }
.params .cell label.plain { border-color: transparent; }
.params .cell label.alt { width: 32px; margin: 0 -1px 0 8px; padding-left: 1px; font: 13px/20px "Liberation Mono", monospace; }
.focus { position: relative; width: 24px; height: 20px; }
.params .focus input { width: 24px; background: #ffec9a; }
.focus svg { position: absolute; left: -2px; top: -2px; width: 27px; height: 24px; }
.caret { position: absolute; left: 4px; top: 3px; width: 2px; height: 14px; background: #0a1464; }
.match { width: 17px; height: 18px; margin-left: -2px; border: 1px solid #b4bcc6; border-radius: 2px; background: linear-gradient(#dfe7f0, #b8c8e0); display: grid; place-items: center; }
.match svg { width: 13px; height: 13px; }
.foot { display: flex; align-items: flex-start; margin-top: auto; height: 38px; }
.low { flex: 1; height: 14px; border-bottom: 1px solid #a9b7c6; box-shadow: 0 1px #fff; }
.curve { flex: none; }
.actions { display: flex; gap: 2px; padding: 8px 7px 0 16px; border-top: 1px solid #a9b7c6; }
.text { width: 38px; height: 20px; line-height: 18px; }
</style>
